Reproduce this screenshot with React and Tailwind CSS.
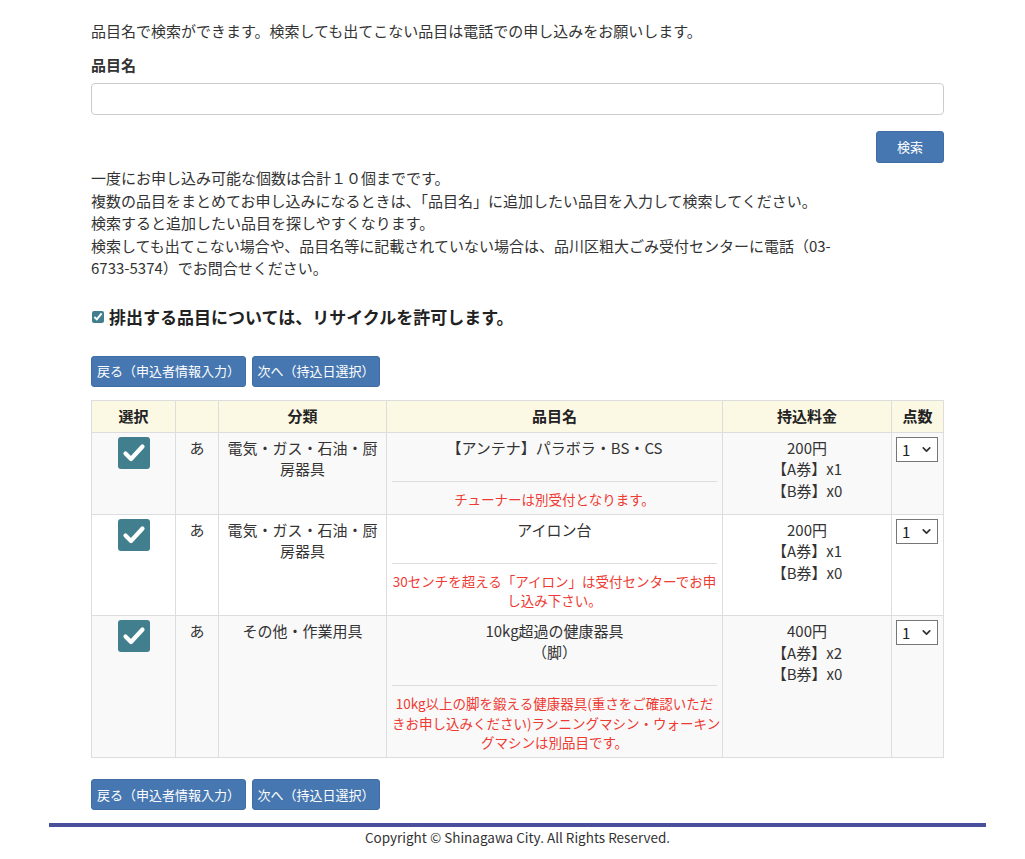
import { ChevronDown } from 'lucide-react'

const items = [
  {
    id: 1,
    kana: 'あ',
    category: ['電気・ガス・石油・厨', '房器具'],
    name: ['【アンテナ】パラボラ・BS・CS'],
    note: ['チューナーは別受付となります。'],
    price: '200円',
    a: 'x1',
    b: 'x0',
  },
  {
    id: 2,
    kana: 'あ',
    category: ['電気・ガス・石油・厨', '房器具'],
    name: ['アイロン台'],
    note: ['30センチを超える「アイロン」は受付センターでお申', 'し込み下さい。'],
    price: '200円',
    a: 'x1',
    b: 'x0',
  },
  {
    id: 3,
    kana: 'あ',
    category: ['その他・作業用具'],
    name: ['10kg超過の健康器具', '（脚）'],
    note: [
      '10kg以上の脚を鍛える健康器具(重さをご確認いただ',
      'きお申し込みください)ランニングマシン・ウォーキン',
      'グマシンは別品目です。',
    ],
    price: '400円',
    a: 'x2',
    b: 'x0',
  },
]

function CheckIcon() {
  return (
    <span className="inline-flex h-8 w-8 items-center justify-center rounded-[3px] bg-[#427f8e]">
      <svg width="24" height="24" viewBox="0 0 24 24" fill="none">
        <path d="M3.5 12.5l5.5 5.5L20.5 5.5" stroke="white" strokeWidth="4.2" strokeLinecap="round" strokeLinejoin="round" />
      </svg>
    </span>
  )
}

function NavButtons() {
  return (
    <div className="flex gap-[6px]">
      <button className="h-[31px] w-[155px] rounded-[3px] border border-[#3f6ea5] bg-[#4677b0] text-[13px] text-white">
        戻る（申込者情報入力）
      </button>
      <button className="h-[31px] w-[128px] rounded-[3px] border border-[#3f6ea5] bg-[#4677b0] text-[13px] text-white">
        次へ（持込日選択）
      </button>
    </div>
  )
}

function QtySelect() {
  return (
    <div className="relative h-[25px] w-[42px] border border-[#767676] bg-white">
      <select defaultValue="1" className="h-full w-full appearance-none bg-transparent pl-[5px] text-[15px] leading-[23px] text-[#222] outline-none">
        {[1, 2, 3, 4, 5, 6, 7, 8, 9, 10].map((n) => (
          <option key={n} value={n}>{n}</option>
        ))}
      </select>
      <ChevronDown size={13} strokeWidth={3.2} className="pointer-events-none absolute right-[4px] top-[5px] text-[#333]" />
    </div>
  )
}

export default function App() {
  return (
    <div className="min-h-[859px] bg-white font-['Noto_Sans_CJK_JP','Noto_Sans',sans-serif] text-[15px] text-[#333]">
      <div className="ml-[49px] w-[937px]">
        <div className="px-[42px] pt-[20px]">
          <p className="leading-[22px]">品目名で検索ができます。検索しても出てこない品目は電話での申し込みをお願いします。</p>

          <label className="mt-[12px] block font-bold leading-[22px]">品目名</label>
          <input type="text" className="mt-[7px] block h-[32px] w-full rounded-[4px] border border-[#cccccc] px-3 outline-none" />

          <div className="mt-[16px] flex justify-end">
            <button className="h-[32px] w-[68px] rounded-[3px] border border-[#3f6ea5] bg-[#4677b0] text-[13px] text-white">検索</button>
          </div>

          <div className="mt-[4px] whitespace-nowrap leading-[22.5px]">
            <p>一度にお申し込み可能な個数は合計１０個までです。</p>
            <p>複数の品目をまとめてお申し込みになるときは、「品目名」に追加したい品目を入力して検索してください。</p>
            <p>検索すると追加したい品目を探しやすくなります。</p>
            <p>検索しても出てこない場合や、品目名等に記載されていない場合は、品川区粗大ごみ受付センターに電話（03-</p>
            <p>6733-5374）でお問合せください。</p>
          </div>

          <label className="mt-[25px] flex items-center gap-[5px] text-[17px] font-bold leading-[24px] text-[#222]">
            <input type="checkbox" defaultChecked className="ml-[1px] h-[12px] w-[12px] accent-[#427f8e]" />
            排出する品目については、リサイクルを許可します。
          </label>

          <div className="mt-[27px]">
            <NavButtons />
          </div>

          <table className="mt-[13px] w-full table-fixed border-collapse border border-[#dddddd] text-center">
            <thead>
              <tr className="h-[32px] bg-[#fbf8e4] font-bold text-[#222]">
                <th className="w-[84px] border border-[#dddddd]">選択</th>
                <th className="w-[43px] border border-[#dddddd]"></th>
                <th className="w-[168px] border border-[#dddddd]">分類</th>
                <th className="w-[336px] border border-[#dddddd]">品目名</th>
                <th className="w-[169px] border border-[#dddddd]">持込料金</th>
                <th className="border border-[#dddddd]">点数</th>
              </tr>
            </thead>
            <tbody>
              {items.map((item, i) => (
                <tr key={item.id} className={i % 2 === 0 ? 'bg-[#f9f9f9]' : 'bg-white'}>
                  <td className="border border-[#dddddd] px-[5px] pt-[4px] align-top">
                    <CheckIcon />
                  </td>
                  <td className="border border-[#dddddd] px-[5px] pt-[4px] align-top leading-[21px]">{item.kana}</td>
                  <td className="border border-[#dddddd] px-[5px] pt-[4px] align-top leading-[21px]">
                    {item.category.map((c) => (
                      <div key={c}>{c}</div>
                    ))}
                  </td>
                  <td className="border border-[#dddddd] px-[5px] pb-[5px] pt-[4px] align-top">
                    <div className="leading-[21px]">
                      {item.name.map((n) => (
                        <div key={n}>{n}</div>
                      ))}
                    </div>
                    <div className="mb-[8px] mt-[23px] border-t border-[#dddddd]"></div>
                    <div className="text-[13.5px] leading-[19.25px] text-[#ee3a33]">
                      {item.note.map((n) => (
                        <div key={n} className="whitespace-nowrap">{n}</div>
                      ))}
                    </div>
                  </td>
                  <td className="border border-[#dddddd] px-[5px] pt-[4px] align-top leading-[21.5px]">
                    <div>{item.price}</div>
                    <div>【A券】{item.a}</div>
                    <div>【B券】{item.b}</div>
                  </td>
                  <td className="border border-[#dddddd] px-[4px] pt-[4px] align-top">
                    <QtySelect />
                  </td>
                </tr>
              ))}
            </tbody>
          </table>

          <div className="mt-[21px]">
            <NavButtons />
          </div>
        </div>

        <div className="mt-[13px] h-[4px] bg-[#4b509d]"></div>
        <p className="text-center text-[13.5px] leading-[20px] text-[#333]">Copyright © Shinagawa City. All Rights Reserved.</p>
      </div>
    </div>
  )
}
